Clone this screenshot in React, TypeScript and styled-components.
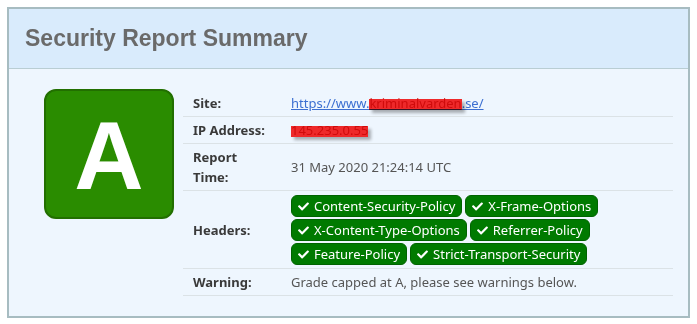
import React from 'react';
import styled, { createGlobalStyle } from 'styled-components';
import { FaCheck } from 'react-icons/fa';

const GlobalStyle = createGlobalStyle`
  html, body {
    margin: 0;
    padding: 0;
    background: #fff;
  }
  body {
    font-family: "Noto Sans", "Open Sans", sans-serif;
  }
`;

const headers = [
  'Content-Security-Policy',
  'X-Frame-Options',
  'X-Content-Type-Options',
  'Referrer-Policy',
  'Feature-Policy',
  'Strict-Transport-Security',
];

export default function App() {
  return (
    <>
      <GlobalStyle />
      <Page>
        <Panel>
          <PanelHeader>
            <Title>Security Report Summary</Title>
          </PanelHeader>
          <PanelBody>
            <GradeBox>
              <GradeLetter>A</GradeLetter>
            </GradeBox>
            <Table>
              <Row>
                <Label>Site:</Label>
                <Value>
                  <Link href="#">
                    https://www.<Redacted>kriminalvarden</Redacted>.se/
                  </Link>
                </Value>
              </Row>
              <Row>
                <Label>IP Address:</Label>
                <Value>
                  <Redacted>145.235.0.55</Redacted>
                </Value>
              </Row>
              <Row>
                <Label>
                  Report
                  <br />
                  Time:
                </Label>
                <Value>31 May 2020 21:24:14 UTC</Value>
              </Row>
              <Row>
                <Label>Headers:</Label>
                <BadgeValue>
                  {headers.map((h) => (
                    <Badge key={h}>
                      <FaCheck size={11} />
                      {h}
                    </Badge>
                  ))}
                </BadgeValue>
              </Row>
              <Row>
                <Label>Warning:</Label>
                <Value>Grade capped at A, please see warnings below.</Value>
              </Row>
            </Table>
          </PanelBody>
        </Panel>
      </Page>
    </>
  );
}

const Page = styled.div`
  padding: 7px 0 0 7px;
  width: 683px;
`;

const Panel = styled.div`
  border: 2px solid #a7bcc1;
  background: #eef6fe;
`;

const PanelHeader = styled.div`
  height: 59px;
  background: #d9ebfc;
  border-bottom: 1px solid #b9cdd3;
  display: flex;
  align-items: center;
  padding-left: 16px;
`;

const Title = styled.h1`
  margin: 0;
  font-family: "Liberation Sans", Arial, sans-serif;
  font-size: 23px;
  font-weight: bold;
  color: #6a6a6a;
`;

const PanelBody = styled.div`
  display: flex;
  align-items: flex-start;
  gap: 9px;
  padding: 20px 15px 20px 35px;
`;

const GradeBox = styled.div`
  width: 126px;
  height: 126px;
  flex: none;
  background: #2a8c00;
  border: 2px solid #226f00;
  border-radius: 12px;
  display: flex;
  align-items: center;
  justify-content: center;
`;

const GradeLetter = styled.span`
  font-family: "Liberation Sans", Arial, sans-serif;
  font-size: 96px;
  font-weight: bold;
  color: #fff;
  line-height: 1;
  margin-top: 4px;
`;

const Table = styled.div`
  flex: 1;
  display: flex;
  flex-direction: column;
  margin-top: 1px;
  font-size: 13px;
  line-height: 20px;
`;

const Row = styled.div`
  display: flex;
  align-items: center;
  border-bottom: 1px solid #dbe2e6;
`;

const Label = styled.div`
  width: 78px;
  flex: none;
  padding: 3px 10px;
  font-weight: bold;
  color: #3a3a3a;
`;

const Value = styled.div`
  padding: 3px 10px;
  color: #555;
`;

const BadgeValue = styled.div`
  padding: 4px 10px 3px;
  display: flex;
  flex-wrap: wrap;
  gap: 2px 3px;
`;

const Badge = styled.span`
  display: inline-flex;
  align-items: center;
  gap: 5px;
  height: 20px;
  padding: 0 6px;
  background: #007a00;
  border: 1px solid #006300;
  border-radius: 6px;
  color: #fff;
  white-space: nowrap;
`;

const Link = styled.a`
  color: #3b6fd1;
  text-decoration: underline;
`;

/* red marker stroke laid over the hidden part of the text */
const Redacted = styled.span`
  position: relative;
  color: #d04040;

  &::after {
    content: '';
    position: absolute;
    left: 0;
    right: 0;
    top: 5px;
    height: 11px;
    background: #ff2a2a;
    mix-blend-mode: multiply;
    box-shadow: 3px 3px 3px rgba(0, 0, 0, 0.3);
  }
`;
